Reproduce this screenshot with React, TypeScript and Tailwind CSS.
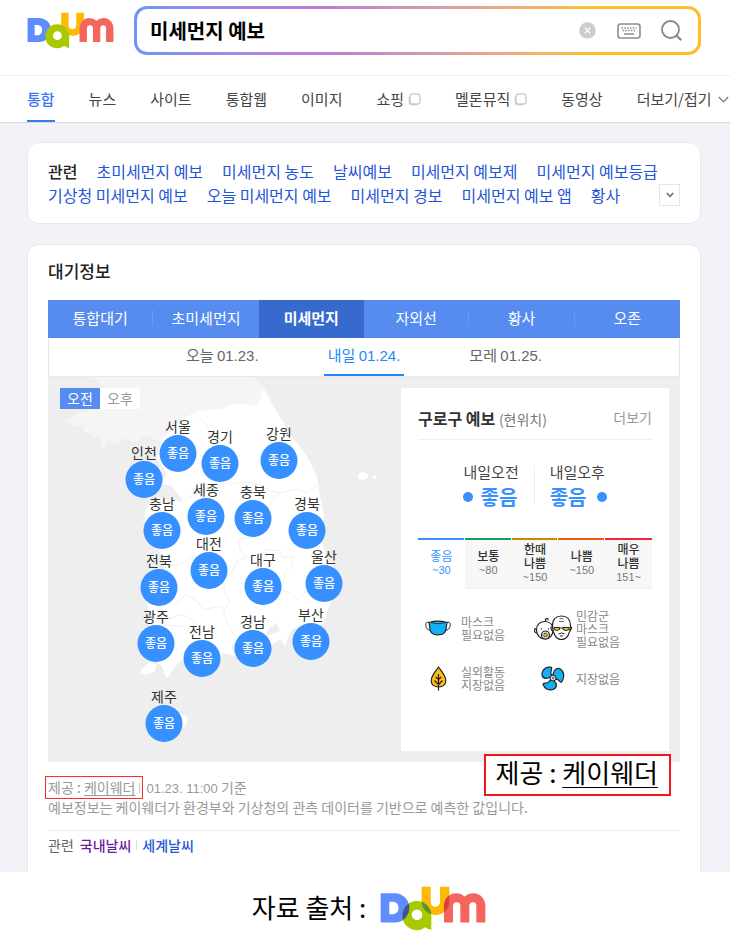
import { useState } from "react";

type Pin = {
  name: string;
  x: number;
  y: number;
};

type Grade = {
  lines: string[];
  range: string;
  bar: string;
};

const NAV = [
  { label: "통합" },
  { label: "뉴스" },
  { label: "사이트" },
  { label: "통합웹" },
  { label: "이미지" },
  { label: "쇼핑", external: true },
  { label: "멜론뮤직", external: true },
  { label: "동영상" },
  { label: "더보기/접기", more: true },
];

const RELATED = [
  "초미세먼지 예보",
  "미세먼지 농도",
  "날씨예보",
  "미세먼지 예보제",
  "미세먼지 예보등급",
  "기상청 미세먼지 예보",
  "오늘 미세먼지 예보",
  "미세먼지 경보",
  "미세먼지 예보 앱",
  "황사",
];

const TABS = ["통합대기", "초미세먼지", "미세먼지", "자외선", "황사", "오존"];

const DAYS = [
  { name: "오늘", date: "01.23." },
  { name: "내일", date: "01.24." },
  { name: "모레", date: "01.25." },
];

// centre of each circle on the map
const PINS: Pin[] = [
  { name: "서울", x: 130, y: 76 },
  { name: "경기", x: 172, y: 86 },
  { name: "강원", x: 231, y: 83 },
  { name: "인천", x: 96, y: 102 },
  { name: "세종", x: 158, y: 139 },
  { name: "충북", x: 205, y: 141 },
  { name: "충남", x: 114, y: 153 },
  { name: "경북", x: 259, y: 153 },
  { name: "대전", x: 161, y: 193 },
  { name: "대구", x: 215, y: 209 },
  { name: "전북", x: 111, y: 210 },
  { name: "울산", x: 276, y: 206 },
  { name: "광주", x: 108, y: 266 },
  { name: "전남", x: 154, y: 281 },
  { name: "경남", x: 205, y: 271 },
  { name: "부산", x: 263, y: 264 },
  { name: "제주", x: 116, y: 346 },
];

const GRADES: Grade[] = [
  { lines: ["좋음"], range: "~30", bar: "bg-[#3690ff]" },
  { lines: ["보통"], range: "~80", bar: "bg-[#14a05a]" },
  { lines: ["한때", "나쁨"], range: "~150", bar: "bg-[#c8860a]" },
  { lines: ["나쁨"], range: "~150", bar: "bg-[#f4590f]" },
  { lines: ["매우", "나쁨"], range: "151~", bar: "bg-[#f0273f]" },
];

const Logo = ({ className, overlap }: { className: string; overlap?: boolean }) => {
  const d = "M62 462H104A44 44 0 0 1 104 550H62Z";
  const a = "M127 529A43 43 0 0 1 214 529V572Q204 571 196 564A43 43 0 0 1 127 529Z";
  const u = "M185 443H212V489A14 14 0 0 0 240 489V443H268V486A41 41 0 0 1 185 486Z";
  const m =
    "M252 550V502C252 478 268 462 288 462Q304 462 314 472Q324 462 340 462C360 462 376 478 376 500V550H349V500Q349 489 339 489Q328 489 328 500V550H301V500Q301 489 290 489Q279 489 279 500V550Z";
  return (
    <svg viewBox="60 441 318 134" className={className} role="img" aria-label="Daum">
      <clipPath id="logo-a">
        <path d={a} />
      </clipPath>
      <clipPath id="logo-u">
        <path d={u} />
      </clipPath>
      <path d={d} fill="#5f8cff" />
      <path d={u} fill="#ffb900" />
      <path d={m} fill="#f4655d" />
      <path d={a} fill="#aac800" />
      {overlap && (
        <>
          <path d={d} fill="#3c5596" clipPath="url(#logo-a)" />
          <path d={u} fill="#5d9032" clipPath="url(#logo-a)" />
          <path d={m} fill="#dc3a3c" clipPath="url(#logo-u)" />
        </>
      )}
      <path d="M88 488H101A19 19 0 0 1 101 525H88Z" fill="#fff" />
      <circle cx="171" cy="527" r="16" fill="#fff" />
    </svg>
  );
};

const ExternalIcon = () => (
  <svg viewBox="0 0 13 13" className="ml-1 h-[13px] w-[13px]" fill="none">
    <rect x="0.5" y="2.5" width="10" height="10" rx="2.5" fill="#ddd" />
    <rect x="2" y="1" width="10" height="10" rx="2" fill="#fff" stroke="#b5b5b5" />
  </svg>
);

const MaskIcon = () => (
  <svg viewBox="0 0 26 16" className="h-4 w-[26px]" fill="none" stroke="#222">
    <path d="M4.500 2.500C1.500 1.500.6 3 .8 5.500 1 8.500 3 10 5.800 10.500M21.500 2.500C24.500 1.500 25.400 3 25.200 5.500 25 8.500 23 10 20.200 10.500" />
    <path
      d="M4 2.500Q13 -.2 22 2.500L20.800 10Q20.300 14.800 13 14.800T5.200 10Z"
      fill="#12b0f5"
      strokeWidth="1.2"
    />
    <path d="M6 2.600Q13 5 20 2.600" strokeWidth=".8" />
  </svg>
);

const FacesIcon = () => (
  <svg viewBox="0 0 38 26" className="h-[26px] w-[38px]" fill="#fff" stroke="#222" strokeWidth="1.200">
    <path d="M2.800 14Q.4 13 .5 15.500T3 17.500" />
    <path d="M2.500 15C2.500 9.500 6 6.500 11 6.500S19 10 19 15 16 24 11 24 2.500 20 2.500 15Z" />
    <path d="M12 6.500Q10.500 3.500 13 3.500 14.500 3.800 14 5.200" fill="none" />
    <circle cx="11.500" cy="20" r="4" fill="#ddd" />
    <circle cx="11.500" cy="20" r="1.800" fill="#f7c01b" strokeWidth=".7" />
    <path d="M7 13.800H8M14 13.800H15" />
    <path d="M18.500 12Q16.800 11.500 17 13.500T19 16M36 12Q37.700 11.500 37.400 13.500T35.500 16" />
    <path d="M18.500 11C18.500 4 22 1 27.500 1S36.500 4 36.500 11 33 24.500 27.500 24.500 18.500 18 18.500 11Z" />
    <path d="M25.500 4Q27.500 3 29.500 4M25 6.500H30" fill="none" strokeWidth=".7" />
    <path d="M20 12.500H25.500V14.500Q22.500 16.500 20 14.500ZM29 12.500H35V14.500Q32 16.500 29 14.500Z" fill="#f7c01b" strokeWidth="1" />
    <path d="M25.500 13H29M24.500 19Q27.500 17 30.500 19M26 21H29" fill="none" strokeWidth="1" />
  </svg>
);

const LeafIcon = () => (
  <svg viewBox="0 0 17 25" className="h-[25px] w-[17px]" fill="none" stroke="#222">
    <path
      d="M8.500 1C12 6 15.800 10 15.800 14.500 15.800 18.800 12.500 21 8.500 21S1.200 18.800 1.200 14.500C1.200 10 5 6 8.500 1Z"
      fill="#fbbc1c"
      strokeWidth="1.200"
    />
    <path d="M8.500 8V24.500M8.500 13.500 5.800 11M8.500 13.500 11.200 11M8.500 18.500 4.500 14.500M8.500 18.500 12.500 14.500" strokeWidth="1.200" />
  </svg>
);

const FanIcon = () => (
  <svg viewBox="0 0 24 25" className="h-[25px] w-6" fill="#12b0f5" stroke="#222" strokeWidth="1.200">
    <path d="M9.500 11C3.500 14 .8 11.500 1 7.500 1.300 3 5.500.8 9.800 1.200 11.800 1.500 10 4 9.800 6.500Q9.700 8.500 11.500 9.500Z" />
    <path d="M12 9.500C12.500 3 16.500 1 20 3.500 23.500 6.500 23.500 11.500 21 15.500 19.800 17.500 18.500 14.500 16.500 13.500Q15 13 14 13.500Z" />
    <path d="M12.500 14.500C17 18 15.800 22.500 11.500 23.700 7.500 24.600 3.500 22.500 2.200 18.800 1.700 16.800 4.500 17.500 7 16.500 8.500 15.800 9 14.500 9.500 13.500Z" />
    <circle cx="12" cy="12" r="3" fill="#ccc" strokeWidth="1" />
    <circle cx="12" cy="12" r=".8" fill="#222" stroke="none" />
  </svg>
);

const ADVICE = [
  { icon: <MaskIcon />, lines: ["마스크", "필요없음"] },
  { icon: <FacesIcon />, lines: ["민감군", "마스크", "필요없음"] },
  { icon: <LeafIcon />, lines: ["실외활동", "지장없음"] },
  { icon: <FanIcon />, lines: ["지장없음"] },
];

const KoreaMap = () => (
  <svg viewBox="-6 3 1050 1155" className="h-[385px] w-[350px]" aria-hidden="true">
    <path
      d="M130 3L160 30 150 70 115 105 80 115 50 135 75 150 105 148 100 172 125 170 130 185 150 180 155 218 175 195 200 205 225 185 250 200 290 180 345 200 440 110 630 90 645 45 610 3Z"
      fill="#f5f5f5"
    />
    <path
      d="M640 35L670 90 720 175 770 240 803 305 808 350 822 420 812 490 830 540 875 610 850 660 820 740 780 770 745 750 725 760 705 810 690 790 665 808 650 780 690 765 680 740 655 760 640 800 600 820 560 790 545 812 555 840 520 830 500 870 460 870 420 880 395 850 370 880 350 908 335 870 305 850 290 800 300 720 285 660 330 620 345 560 325 520 290 470 283 410 300 378 330 365 365 370 400 375 365 330 335 325 350 290 320 250 335 190 400 130 440 105 510 100 560 82 620 90 632 70Z"
      fill="#fff"
    />
    <path d="M275 880L300 858 320 865 315 885 285 897 270 890ZM300 1010L380 1005 415 1025 405 1050 370 1070 300 1070Z" fill="#fff" />
    <path d="M925 300Q928 288 940 289T954 299 940 312 925 300Z" fill="#fff" />
    <circle cx="975" cy="303" r="5" fill="#fff" />
    <path
      d="M432 108L470 145 480 180 530 230 545 260 525 300 540 325 580 318 625 325 660 345 690 350 740 340 770 350 805 325M365 330L350 370 400 378 430 355 520 330M690 350L660 380 640 430 625 480 565 490 570 520 590 545 560 555 545 590 520 610 525 650 540 680 520 700 530 740 555 780M345 575L400 560 430 540 460 560M370 690L410 655 440 675 460 700 520 690M370 725Q390 705 425 730T380 750 370 725M620 560L650 520 690 525 700 545 730 540 725 570 705 590 695 640 720 650 740 670 780 640"
      fill="none"
      stroke="#f0f0f0"
      strokeWidth="3"
    />
  </svg>
);

const MapPin = ({ pin }: { pin: Pin }) => (
  <div
    className="absolute flex w-[37px] -translate-x-1/2 flex-col items-center whitespace-nowrap"
    style={{ left: pin.x, top: pin.y - 36 }}>
    <span className="text-[14px] leading-[18px] text-[#333]">{pin.name}</span>
    <span className="flex h-[37px] w-[37px] items-center justify-center rounded-full bg-[#3690ff] pb-[2px] text-[12px] leading-none font-medium text-white">
      좋음
    </span>
  </div>
);

const Header = () => (
  <header className="flex items-start border-b border-[#eee] pt-[6px] pr-[29px] pb-5 pl-[27px]">
    <a href="#" className="mt-[6px] mr-5 shrink-0">
      <Logo className="h-[37px] w-[87px]" />
    </a>
    <form
      className="h-[49px] min-w-0 flex-1 rounded-[13px] bg-linear-to-r from-[#6f93fb] via-[#c47ad6] via-35% to-[#ffbd2b] to-80% p-[3px]"
      onSubmit={(e) => e.preventDefault()}>
      <div className="flex h-full items-center rounded-[10px] bg-white pr-4 pl-[13px]">
        <input
          type="text"
          aria-label="검색어"
          defaultValue="미세먼지 예보"
          className="w-full min-w-0 flex-1 text-[20px] font-bold text-black outline-none"
        />
        <button type="button" aria-label="지우기" className="mr-[21px] shrink-0">
          <svg viewBox="0 0 17 17" className="h-[17px] w-[17px]">
            <circle cx="8.500" cy="8.500" r="8.300" fill="#ccc" />
            <path d="M5.800 5.800L11.200 11.200M11.200 5.800L5.800 11.200" stroke="#fff" strokeWidth="1.300" />
          </svg>
        </button>
        <button type="button" aria-label="키보드" className="mr-5 shrink-0">
          <svg viewBox="0 0 24 16" className="h-4 w-6" fill="none" stroke="#8a8d92">
            <rect x="1" y="1" width="22" height="14" rx="2.500" strokeWidth="1.600" />
            <path d="M4.500 5H19.500M5.500 7.500H18.500" strokeWidth="1.300" strokeDasharray="1.500 1.300" />
            <path d="M7 11H17" strokeWidth="1.500" />
          </svg>
        </button>
        <button type="submit" aria-label="검색" className="shrink-0">
          <svg viewBox="0 0 21 21" className="h-[21px] w-[21px]" fill="none" stroke="#85888d" strokeWidth="1.800">
            <circle cx="9.500" cy="9.500" r="8.500" />
            <path d="M15.500 15.500L20.200 20.200" strokeWidth="2.200" />
          </svg>
        </button>
      </div>
    </form>
  </header>
);

const Nav = () => (
  <nav className="flex h-[47px] gap-[34px] overflow-hidden border-b border-[#d8dadd] pl-[27px] text-[15px] whitespace-nowrap text-[#444]">
    {NAV.map((item, i) => (
      <a
        key={item.label}
        href="#"
        className={
          i === 0
            ? "flex items-center border-b-2 border-[#3a78f5] pt-[2px] font-medium text-[#3a78f5]"
            : "flex items-center"
        }>
        {item.label}
        {item.external && <ExternalIcon />}
        {item.more && (
          <svg viewBox="0 0 11 7" className="ml-[6px] h-[7px] w-[11px]" fill="none" stroke="#777">
            <path d="M.8 1L5.500 5.800 10.200 1" strokeWidth="1.200" />
          </svg>
        )}
      </a>
    ))}
  </nav>
);

const Related = () => (
  <section className="flex items-end rounded-xl border border-[#e6e9ee] bg-white px-5 pt-4 pb-4">
    <div className="flex flex-1 flex-wrap gap-x-[19px] text-[16px] leading-6 whitespace-nowrap">
      <h2 className="font-medium text-[#222]">관련</h2>
      {RELATED.map((word) => (
        <a key={word} href="#" className="text-[#1f55d8]">
          {word}
        </a>
      ))}
    </div>
    <button
      type="button"
      aria-label="펼치기"
      className="mb-[1px] flex h-[22px] w-[21px] shrink-0 items-center justify-center border border-[#e5e5e5]">
      <svg viewBox="0 0 8 6" className="h-[6px] w-2" fill="none" stroke="#666" strokeWidth="1.500">
        <path d="M.8 1L4 4.500 7.200 1" />
      </svg>
    </button>
  </section>
);

const Forecast = () => (
  <div className="mt-[11px] mr-[11px] mb-[11px] w-[268px] bg-white px-[17px]">
    <div className="flex h-[52px] items-center justify-between border-b border-[#eee] pt-2">
      <h3 className="text-[16px] font-bold text-[#333]">
        구로구 예보 <span className="text-[14px] font-normal text-[#777]">(현위치)</span>
      </h3>
      <a href="#" className="text-[14px] text-[#999]">
        더보기
      </a>
    </div>
    <div className="flex justify-center pt-[22px] pb-[26px] text-[15px] leading-5 text-[#444]">
      <div className="px-[15px]">
        <div>내일오전</div>
        <div className="flex items-center gap-[7px] text-[20px] leading-[30px] font-bold text-[#3690ff]">
          <i className="h-[10px] w-[10px] rounded-full bg-[#3690ff]" />
          좋음
        </div>
      </div>
      <div className="mt-[3px] mb-2 w-px bg-[#eee]" />
      <div className="px-[15px]">
        <div>내일오후</div>
        <div className="flex items-center gap-[10px] text-[20px] leading-[30px] font-bold text-[#3690ff]">
          좋음
          <i className="h-[10px] w-[10px] rounded-full bg-[#3690ff]" />
        </div>
      </div>
    </div>
    <ul className="flex font-['Liberation_Sans','Noto_Sans_CJK_KR',sans-serif]">
      {GRADES.map((grade, i) => (
        <li key={i} className="flex flex-1 flex-col text-center">
          <div className={`h-[2px] ${i < 4 ? "mr-px" : ""} ${grade.bar}`} />
          <div
            className={
              i === 0
                ? "flex h-[49px] flex-col justify-center pb-[2px] text-[#3690ff]"
                : "flex h-[49px] flex-col justify-center border-b border-[#eee] bg-[#f7f7f7] pb-[2px] text-[#777]"
            }>
            {grade.lines.map((line) => (
              <span
                key={line}
                className={i === 0 ? "text-[12px] leading-[14px]" : "text-[12px] leading-[14px] font-medium text-[#333]"}>
                {line}
              </span>
            ))}
            <span className="text-[11px] leading-[13px]">{grade.range}</span>
          </div>
        </li>
      ))}
    </ul>
    <div className="mt-[14px] grid grid-cols-[115px_1fr] font-['Liberation_Sans','Noto_Sans_CJK_KR',sans-serif] text-[12px] leading-[13px] text-[#888]">
      {ADVICE.map((item, i) => (
        <div key={i} className="flex h-[50px] items-center gap-[3px]">
          <div className="flex w-10 shrink-0 justify-center">{item.icon}</div>
          <div className="pt-1">
            {item.lines.map((line) => (
              <div key={line}>{line}</div>
            ))}
          </div>
        </div>
      ))}
    </div>
  </div>
);

const AirInfo = () => {
  const [tab, setTab] = useState(2);
  const [day, setDay] = useState(1);
  const [am, setAm] = useState(true);

  return (
    <section className="mt-5 rounded-t-xl border border-b-0 border-[#e6e9ee] bg-white px-5 pt-[14px] pb-[17px]">
      <h2 className="text-[17px] leading-6 font-medium text-[#222]">대기정보</h2>
      <div className="mt-[17px] flex h-[38px] bg-[#568cf0] text-[15px] text-white">
        {TABS.map((label, i) => (
          <button
            key={label}
            type="button"
            onClick={() => setTab(i)}
            className={
              i === tab
                ? "flex flex-1 items-center justify-center bg-[#366acd] pb-[2px] font-bold"
                : "flex flex-1 items-center justify-center pb-[2px]"
            }>
            <span className="flex-1">{label}</span>
            {i !== tab && i !== tab - 1 && i < 5 && <i className="h-4 w-px bg-[#6a9af3]" />}
          </button>
        ))}
      </div>
      <div className="flex h-[39px] justify-center gap-[61px] border-x border-b border-[#e8e8e8] text-[15px] text-[#666]">
        {DAYS.map((d, i) => (
          <button
            key={d.name}
            type="button"
            onClick={() => setDay(i)}
            className={
              i === day
                ? "border-b-2 border-[#1f87ff] px-1 text-[#1f87ff]"
                : "border-b-2 border-transparent px-1"
            }>
            {d.name} <span className="font-['Liberation_Sans',sans-serif]">{d.date}</span>
          </button>
        ))}
      </div>
      <div className="relative flex justify-between bg-[#eee]">
        <div className="relative">
          <KoreaMap />
          {PINS.map((pin) => (
            <MapPin key={pin.name} pin={pin} />
          ))}
          <div className="absolute top-[11px] left-3 flex text-[14px] leading-[21px]">
            <button
              type="button"
              onClick={() => setAm(true)}
              className={am ? "w-10 bg-[#568cf0] text-white" : "w-10 bg-white text-[#999]"}>
              오전
            </button>
            <button
              type="button"
              onClick={() => setAm(false)}
              className={am ? "w-10 bg-white text-[#999]" : "w-10 bg-[#568cf0] text-white"}>
              오후
            </button>
          </div>
        </div>
        <Forecast />
        {/* enlarged credit */}
        <div className="absolute right-[9px] -bottom-[34px] border-2 border-[#f5141c] bg-white pr-[11px] pb-[6px] pl-[10px] text-[26px] leading-8 text-black">
          제공 :{" "}
          <a href="#" className="underline decoration-1 underline-offset-4">
            케이웨더
          </a>
        </div>
      </div>
      <div className="mt-4 text-[14px] leading-[19px] text-[#999]">
        <p>
          <span className="relative">
            제공 :{" "}
            <a href="#" className="underline underline-offset-2">
              케이웨더
            </a>
            <i className="absolute -top-[1px] -right-2 -left-[3px] h-[23px] border border-[#ff2a2a]" />
          </span>
          <span className="mx-1 inline-block h-[10px] w-px bg-[#ccc]" />
          <span className="ml-[2px] font-['Liberation_Sans',sans-serif] text-[13px]">01.23. 11:00</span> 기준
        </p>
        <p>예보정보는 케이웨더가 환경부와 기상청의 관측 데이터를 기반으로 예측한 값입니다.</p>
      </div>
      <div className="mt-[13px] flex items-center border-t border-[#eee] pt-1 text-[14px] leading-5 font-medium">
        <span className="mr-[6px] font-normal text-[#666]">관련</span>
        <a href="#" className="text-[#6a1b9f]">
          국내날씨
        </a>
        <i className="mx-[5px] h-[10px] w-px bg-[#ddd]" />
        <a href="#" className="text-[#1f55d8]">
          세계날씨
        </a>
      </div>
    </section>
  );
};

const App = () => {
  return (
    <div className="bg-white font-['Noto_Sans_CJK_KR',sans-serif]">
      <Header />
      <Nav />
      <main className="bg-[#f1f3f8] pt-[19px] pr-[29px] pl-[27px]">
        <Related />
        <AirInfo />
      </main>
      <footer className="flex h-[67px] items-center justify-center gap-[14px] pt-[6px] pl-2">
        <span className="pb-1 text-[26px] leading-none text-black">자료 출처 :</span>
        <Logo className="h-[45px] w-[106px]" overlap />
      </footer>
    </div>
  );
};

export default App;
